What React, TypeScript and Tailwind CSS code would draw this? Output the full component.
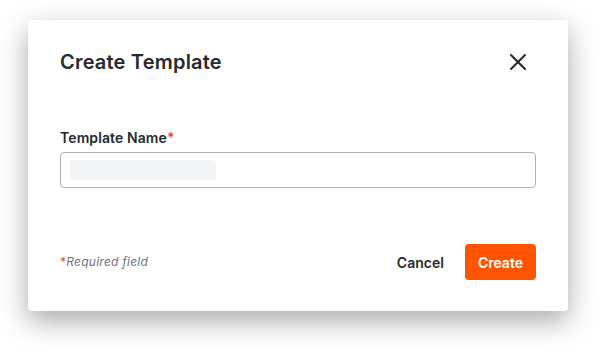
import React from "react";
import { X } from "lucide-react";

export default function App() {
  return (
    <div
      className="w-[596px] h-[348px] bg-white pt-[20px] pl-[28px]"
      style={{ fontFamily: "Inter, 'Noto Sans', sans-serif" }}
    >
      <div className="w-[540px] h-[291px] rounded-[4px] bg-white shadow-[0_10px_28px_rgba(0,0,0,0.34)] pt-[28px] pb-[31px] px-8 flex flex-col">
        <div className="flex items-center justify-between h-7">
          <h1 className="text-[20px] leading-7 font-semibold tracking-[0.2px] text-[#26292d]">Create Template</h1>
          <button className="w-7 h-7 flex items-center justify-center mr-1 text-[#26292d]">
            <X size={28} strokeWidth={1.75} />
          </button>
        </div>
        <div className="mt-[52px] flex flex-col">
          <label className="text-[14px] leading-5 font-semibold tracking-[0.1px] text-[#26292d]">
            Template Name<span className="text-[#e5484d]">*</span>
          </label>
          <div className="mt-1 h-9 w-full rounded-[4px] border border-[#a8b1b6] flex items-center pl-[9px]">
            <div className="w-[146px] h-5 rounded-[4px] bg-[#f3f4f6]" />
          </div>
        </div>
        <div className="mt-auto flex items-center justify-between h-9">
          <span className="text-[12px] italic tracking-[0.25px] text-[#6b7280]">
            <span className="text-[#e5484d] not-italic">*</span>Required field
          </span>
          <div className="flex items-center">
            <button className="text-[14px] font-semibold text-[#26292d] mr-[21px]">Cancel</button>
            <button className="h-9 px-[13px] rounded-[4px] bg-[#ff5500] text-white text-[14px] font-semibold">
              Create
            </button>
          </div>
        </div>
      </div>
    </div>
  );
}
